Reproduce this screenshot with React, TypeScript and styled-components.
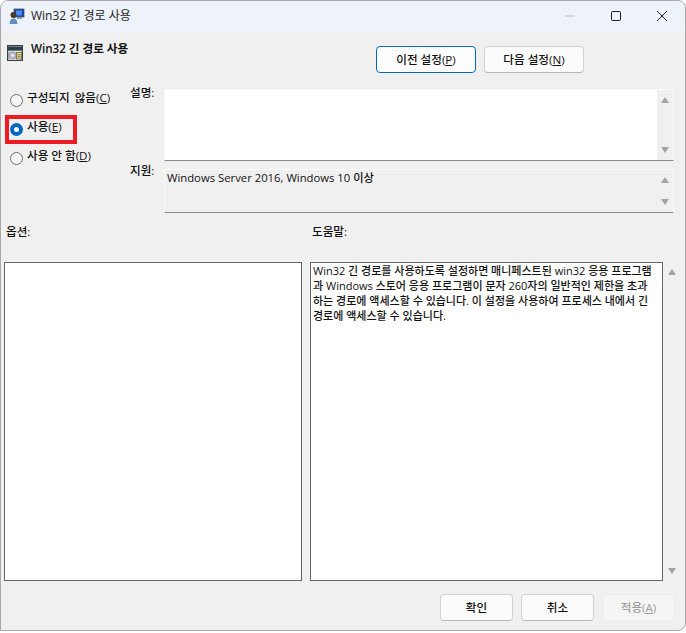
import React from 'react'
import styled, {createGlobalStyle} from 'styled-components'

const GlobalStyle = createGlobalStyle`
  html, body {
    margin: 0;
    padding: 0;
    background: #ffffff;
  }
  body {
    font-family: "Open Sans", "Noto Sans CJK KR", sans-serif;
    font-size: 11.6px;
    color: #111;
  }
  * { box-sizing: border-box; }
`

const Window = styled.div`
  width: 686px;
  height: 631px;
  display: flex;
  flex-direction: column;
  background: #f0f0f0;
  border: 1px solid #a9a9a9;
  border-radius: 8px 8px 8px 0;
  overflow: hidden;
`

const TitleBar = styled.div`
  height: 30px;
  flex: none;
  display: flex;
  align-items: center;
  padding-left: 8px;
  background: #eef2f9;
`

const TitleText = styled.span`
  margin: -2px 0 0 6px;
  font-size: 12px;
  color: #222;
`

const Controls = styled.div`
  margin-left: auto;
  display: flex;
  align-items: center;
`

const ControlButton = styled.div`
  width: 46px;
  height: 30px;
  display: flex;
  align-items: center;
  justify-content: center;
`

const Header = styled.div`
  height: 58px;
  flex: none;
  display: flex;
  align-items: flex-start;
  padding: 14px 101px 0 6px;
`

const Heading = styled.h1`
  margin: -3px 0 0 8px;
  font-size: 11.6px;
  font-weight: 600;
  line-height: 14px;
  white-space: nowrap;
`

const NavButtons = styled.div`
  margin-left: auto;
  display: flex;
  gap: 8px;
  padding-top: 1px;
`

const Button = styled.button<{$primary?: boolean; $width: number; $disabled?: boolean}>`
  width: ${p => p.$width}px;
  height: 27px;
  padding: 0 0 2px;
  font: inherit;
  font-weight: 500;
  color: ${p => (p.$disabled ? '#9d9d9d' : '#111')};
  background: ${p => (p.$primary ? '#fdfdfd' : p.$disabled ? '#f5f5f5' : '#fbfbfb')};
  border: 1px solid ${p => (p.$primary ? '#0067c0' : p.$disabled ? '#ececec' : '#d2d2d2')};
  border-bottom-color: ${p => (p.$primary ? '#0067c0' : p.$disabled ? '#ececec' : '#b8b8b8')};
  border-radius: 4px;
`

const Settings = styled.div`
  height: 124px;
  flex: none;
  display: grid;
  grid-template-columns: 129px 34px 510px;
  grid-template-rows: 72px 44px;
  row-gap: 8px;
`

const RadioColumn = styled.div`
  grid-row: 1 / span 2;
  display: flex;
  flex-direction: column;
  margin-top: -3px;
  padding-left: 4px;
`

const RadioRow = styled.label<{$highlight?: boolean}>`
  width: 72px;
  height: 29px;
  display: flex;
  align-items: center;
  gap: 4px;
  padding-left: 5px;
  white-space: nowrap;
  font-weight: 500;
  ${p => p.$highlight && 'outline: 4px solid #ed1c24; outline-offset: -4px;'}
`

const RadioText = styled.span<{$spaced?: boolean}>`
  position: relative;
  top: -4px;
  ${p => p.$spaced && 'word-spacing: 2px;'}
`

const RadioCircle = styled.span<{$checked?: boolean}>`
  width: 13px;
  height: 13px;
  flex: none;
  border-radius: 50%;
  background: ${p => (p.$checked ? '#ffffff' : '#f5f5f5')};
  border: ${p => (p.$checked ? '4px solid #0067c0' : '1px solid #6e6e6e')};
`

const FieldLabel = styled.div<{$lift: number}>`
  margin-top: ${p => -p.$lift}px;
  font-weight: 500;
  line-height: 16px;
`

const InfoBox = styled.div<{$white?: boolean}>`
  display: flex;
  background: ${p => (p.$white ? '#ffffff' : '#f0f0f0')};
  border-bottom: 1px solid #8a8a8a;
  border-top: 1px solid #fafafa;
  border-left: 1px solid #fafafa;
  border-right: 1px solid #fafafa;
`

const InfoText = styled.div`
  flex: 1;
  padding: 0 0 0 2px;
  font-size: 11.3px;
  line-height: 15px;
  font-weight: 500;
`

const ScrollTrack = styled.div<{$width?: number; $plain?: boolean}>`
  width: ${p => p.$width ?? 16}px;
  flex: none;
  display: flex;
  flex-direction: column;
  justify-content: space-between;
  align-items: center;
  padding: 7px 0;
  background: ${p => (p.$plain ? 'transparent' : '#f0f0f0')};
`

const Arrow = styled.span<{$down?: boolean}>`
  width: 0;
  height: 0;
  border-left: 4.5px solid transparent;
  border-right: 4.5px solid transparent;
  ${p => (p.$down ? 'border-top: 6px solid #a3a3a3;' : 'border-bottom: 6px solid #a3a3a3;')}
`

const SectionLabels = styled.div`
  height: 49px;
  flex: none;
  display: grid;
  grid-template-columns: 306px 1fr;
  padding: 11px 0 0 5px;
  font-weight: 500;
  line-height: 16px;
`

const Panels = styled.div`
  height: 319px;
  flex: none;
  display: flex;
  padding-left: 3px;
`

const OptionsPanel = styled.div`
  width: 298px;
  background: #ffffff;
  border: 1px solid #666;
`

const HelpPanel = styled.div`
  width: 353px;
  margin-left: 8px;
  padding: 0 0 0 2px;
  background: #ffffff;
  border: 1px solid #666;
  font-size: 11px;
  font-weight: 500;
  line-height: 15px;
  white-space: nowrap;
`

const Footer = styled.div`
  flex: 1;
  display: flex;
  justify-content: flex-end;
  gap: 8px;
  padding: 13px 10px 0 0;
`

const WindowIcon = () => (
  <svg width="16" height="16" viewBox="0 0 16 16">
    <rect x="5" y="1" width="10" height="8" fill="#1b3fa8" stroke="#4a5a70" strokeWidth="0.8" />
    <rect x="7" y="2.5" width="6" height="5" fill="#4d8df0" />
    <rect x="8" y="9" width="5" height="2" fill="#8a97a8" />
    <circle cx="4.5" cy="7" r="3" fill="#4a3a2a" />
    <path d="M0.5 16 C1 11.5 2.5 10.5 4.5 10.5 C7 10.5 8 12 8.5 16 Z" fill="#5f8fc4" />
  </svg>
)

const PolicyIcon = () => (
  <svg width="16" height="16" viewBox="0 0 16 16">
    <rect x="0.5" y="0.5" width="15" height="15" fill="#6e8088" stroke="#33424a" />
    <rect x="1" y="2" width="14" height="3" fill="#2f3f46" />
    <rect x="1.5" y="6" width="13" height="9" fill="#dfe3da" />
    <circle cx="5.5" cy="10.5" r="3.6" fill="#c8c0d8" stroke="#6d6d7c" strokeWidth="0.6" />
    <circle cx="5.5" cy="10.5" r="1" fill="#ffffff" />
    <rect x="9.5" y="7.5" width="5" height="6.5" fill="#e9d98a" stroke="#5b5b3a" strokeWidth="0.7" />
    <path d="M10.5 9.8h3M10.5 11.8h3" stroke="#5b5b3a" strokeWidth="0.8" />
  </svg>
)

const App = () => (
  <>
    <GlobalStyle />
    <Window>
      <TitleBar>
        <WindowIcon />
        <TitleText>Win32 긴 경로 사용</TitleText>
        <Controls>
          <ControlButton>
            <svg width="12" height="12" viewBox="0 0 12 12">
              <path d="M1 6h10" stroke="#b9bcc2" strokeWidth="1" />
            </svg>
          </ControlButton>
          <ControlButton>
            <svg width="12" height="12" viewBox="0 0 12 12">
              <rect x="1.5" y="1.5" width="9" height="9" rx="1.2" fill="none" stroke="#1a1a1a" strokeWidth="1" />
            </svg>
          </ControlButton>
          <ControlButton>
            <svg width="12" height="12" viewBox="0 0 12 12">
              <path d="M1 1l10 10M11 1L1 11" stroke="#1a1a1a" strokeWidth="1" />
            </svg>
          </ControlButton>
        </Controls>
      </TitleBar>

      <Header>
        <PolicyIcon />
        <Heading>Win32 긴 경로 사용</Heading>
        <NavButtons>
          <Button $primary $width={100}>
            이전 설정(<u>P</u>)
          </Button>
          <Button $width={100}>
            다음 설정(<u>N</u>)
          </Button>
        </NavButtons>
      </Header>

      <Settings>
        <RadioColumn>
          <RadioRow>
            <RadioCircle />
            <RadioText $spaced>
              구성되지 않음(<u>C</u>)
            </RadioText>
          </RadioRow>
          <RadioRow $highlight>
            <RadioCircle $checked />
            <RadioText>
              사용(<u>E</u>)
            </RadioText>
          </RadioRow>
          <RadioRow>
            <RadioCircle />
            <RadioText>
              사용 안 함(<u>D</u>)
            </RadioText>
          </RadioRow>
        </RadioColumn>
        <FieldLabel $lift={4}>설명:</FieldLabel>
        <InfoBox $white>
          <InfoText />
          <ScrollTrack>
            <Arrow />
            <Arrow $down />
          </ScrollTrack>
        </InfoBox>
        <FieldLabel $lift={6}>지원:</FieldLabel>
        <InfoBox>
          <InfoText>Windows Server 2016, Windows 10 이상</InfoText>
          <ScrollTrack>
            <Arrow />
            <Arrow $down />
          </ScrollTrack>
        </InfoBox>
      </Settings>

      <SectionLabels>
        <span>옵션:</span>
        <span>도움말:</span>
      </SectionLabels>

      <Panels>
        <OptionsPanel />
        <HelpPanel>
          Win32 긴 경로를 사용하도록 설정하면 매니페스트된 win32 응용 프로그램
          <br />
          과 Windows 스토어 응용 프로그램이 문자 260자의 일반적인 제한을 초과
          <br />
          하는 경로에 액세스할 수 있습니다. 이 설정을 사용하여 프로세스 내에서 긴
          <br />
          경로에 액세스할 수 있습니다.
        </HelpPanel>
        <ScrollTrack $width={17} $plain>
          <Arrow />
          <Arrow $down />
        </ScrollTrack>
      </Panels>

      <Footer>
        <Button $width={73}>확인</Button>
        <Button $width={73}>취소</Button>
        <Button $width={73} $disabled>
          적용(<u>A</u>)
        </Button>
      </Footer>
    </Window>
  </>
)

export default App
